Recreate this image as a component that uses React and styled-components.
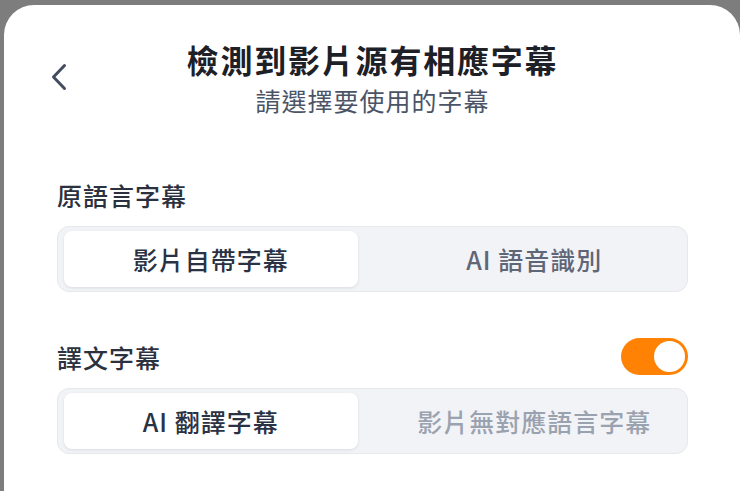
import React, { useState } from 'react';
import styled, { createGlobalStyle } from 'styled-components';

const GlobalStyle = createGlobalStyle`
  html, body {
    margin: 0;
    padding: 0;
    background: #7d7d7d;
    font-family: "Noto Sans CJK TC", "Noto Sans", sans-serif;
  }
`;

const Sheet = styled.div`
  margin: 5px 0 0 4px;
  min-height: calc(100vh - 5px);
  background: #ffffff;
  border-radius: 30px 30px 0 0;
  padding: 31px 52px 0 53px;
  box-sizing: border-box;
`;

const Header = styled.div`
  display: grid;
  grid-template-columns: 40px 1fr 40px;
  align-items: center;
`;

const BackButton = styled.button`
  border: none;
  background: none;
  padding: 0;
  margin-left: -6px;
  width: 24px;
  height: 30px;
  display: flex;
  align-items: center;
  justify-content: flex-start;
  color: #444d60;
  cursor: pointer;
`;

const TitleBlock = styled.div`
  display: flex;
  flex-direction: column;
  align-items: center;
`;

const Title = styled.h1`
  margin: 0;
  font-size: 32px;
  line-height: 46px;
  font-weight: 700;
  letter-spacing: 1.8px;
  color: #1d2027;
`;

const Subtitle = styled.p`
  margin: 0;
  font-size: 25px;
  line-height: 36px;
  font-weight: 400;
  letter-spacing: 1px;
  color: #4b5467;
`;

const Section = styled.section`
  margin-top: ${p => p.$top}px;
`;

const LabelRow = styled.div`
  display: flex;
  align-items: center;
  justify-content: space-between;
  height: ${p => p.$h}px;
`;

const Label = styled.span`
  font-size: 25px;
  line-height: 34px;
  font-weight: 500;
  letter-spacing: 1px;
  color: #2b313e;
`;

const Segmented = styled.div`
  margin-top: ${p => p.$top}px;
  display: grid;
  grid-template-columns: 1fr 1fr;
  column-gap: 30px;
  padding: 4px 6px;
  background: #f1f3f6;
  border: 1px solid #e6e8ec;
  border-radius: 12px;
`;

const Segment = styled.button`
  height: 56px;
  border: none;
  border-radius: 8px;
  font-family: inherit;
  font-size: 25px;
  font-weight: 500;
  letter-spacing: 1px;
  background: ${p => (p.$active ? '#ffffff' : 'transparent')};
  box-shadow: ${p => (p.$active ? '0 1px 3px rgba(20, 30, 50, 0.10)' : 'none')};
  color: ${p => (p.$active ? '#2a3244' : p.$disabled ? '#9ba2af' : '#5e6677')};
  cursor: ${p => (p.$disabled ? 'default' : 'pointer')};
`;

const Toggle = styled.button`
  width: 67px;
  height: 37px;
  border: none;
  padding: 3px;
  border-radius: 19px;
  background: ${p => (p.$on ? '#ff8205' : '#d5d9e0')};
  display: flex;
  justify-content: ${p => (p.$on ? 'flex-end' : 'flex-start')};
  cursor: pointer;
`;

const Knob = styled.span`
  width: 31px;
  height: 31px;
  border-radius: 50%;
  background: #ffffff;
`;

function ChevronLeft() {
  return (
    <svg width="16" height="28" viewBox="0 0 16 28" fill="none">
      <path d="M13.5 2.5 L2.5 14 L13.5 25.5" stroke="currentColor" strokeWidth="3" strokeLinecap="round" strokeLinejoin="round" />
    </svg>
  );
}

export default function App() {
  const [source, setSource] = useState(0);
  const [translate, setTranslate] = useState(true);

  return (
    <>
      <GlobalStyle />
      <Sheet>
        <Header>
          <BackButton aria-label="返回">
            <ChevronLeft />
          </BackButton>
          <TitleBlock>
            <Title>檢測到影片源有相應字幕</Title>
            <Subtitle>請選擇要使用的字幕</Subtitle>
          </TitleBlock>
          <span />
        </Header>

        <Section $top={60}>
          <LabelRow $h={34}>
            <Label>原語言字幕</Label>
          </LabelRow>
          <Segmented $top={14}>
            <Segment $active={source === 0} onClick={() => setSource(0)}>影片自帶字幕</Segment>
            <Segment $active={source === 1} onClick={() => setSource(1)}>AI 語音識別</Segment>
          </Segmented>
        </Section>

        <Section $top={46}>
          <LabelRow $h={37}>
            <Label>譯文字幕</Label>
            <Toggle $on={translate} onClick={() => setTranslate(!translate)}>
              <Knob />
            </Toggle>
          </LabelRow>
          <Segmented $top={13}>
            <Segment $active>AI 翻譯字幕</Segment>
            <Segment $disabled>影片無對應語言字幕</Segment>
          </Segmented>
        </Section>
      </Sheet>
    </>
  );
}
